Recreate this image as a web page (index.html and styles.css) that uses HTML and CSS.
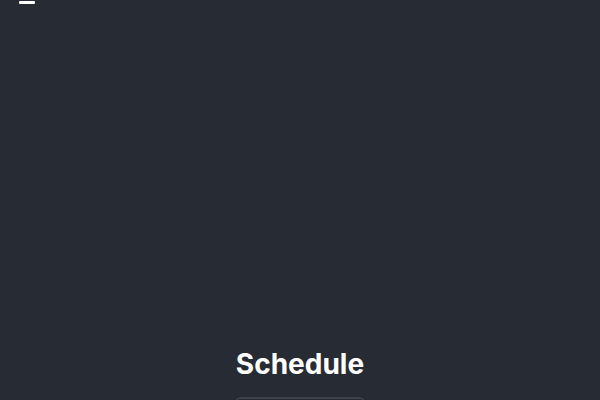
FILE: index.html
```html
<!DOCTYPE html>
<html>
<head>
<meta charset="utf-8">
<link rel="stylesheet" href="styles.css">
</head>
<body>
<div class="page">
  <div class="menu-icon"><span class="bar"></span></div>
  <section class="hero"></section>
  <section class="schedule">
    <h2 class="title">Schedule</h2>
    <div class="card"></div>
  </section>
</div>
</body>
</html>
```
FILE: styles.css
```css
html, body {
  margin: 0;
  padding: 0;
  background: #272b33;
  overflow: hidden;
}
.page {
  width: 600px;
  height: 400px;
  background: #272b33;
  font-family: Inter, "Open Sans", sans-serif;
  color: #ffffff;
  display: flex;
  flex-direction: column;
  position: relative;
  overflow: hidden;
}
.menu-icon {
  position: absolute;
  left: 19px;
  top: 0;
}
.bar {
  display: block;
  width: 16px;
  height: 3px;
  margin-top: 1px;
  background: #ffffff;
  border-radius: 1px;
}
.hero {
  height: 346px;
  flex-shrink: 0;
}
.schedule {
  flex-shrink: 0;
  display: flex;
  flex-direction: column;
  align-items: center;
}
.title {
  margin: 0;
  font-size: 28px;
  font-weight: 700;
  line-height: 36px;
}
.card {
  margin-top: 15px;
  width: 130px;
  height: 40px;
  border-top: 2px solid #3d424d;
  border-radius: 6px 6px 0 0;
}
```
